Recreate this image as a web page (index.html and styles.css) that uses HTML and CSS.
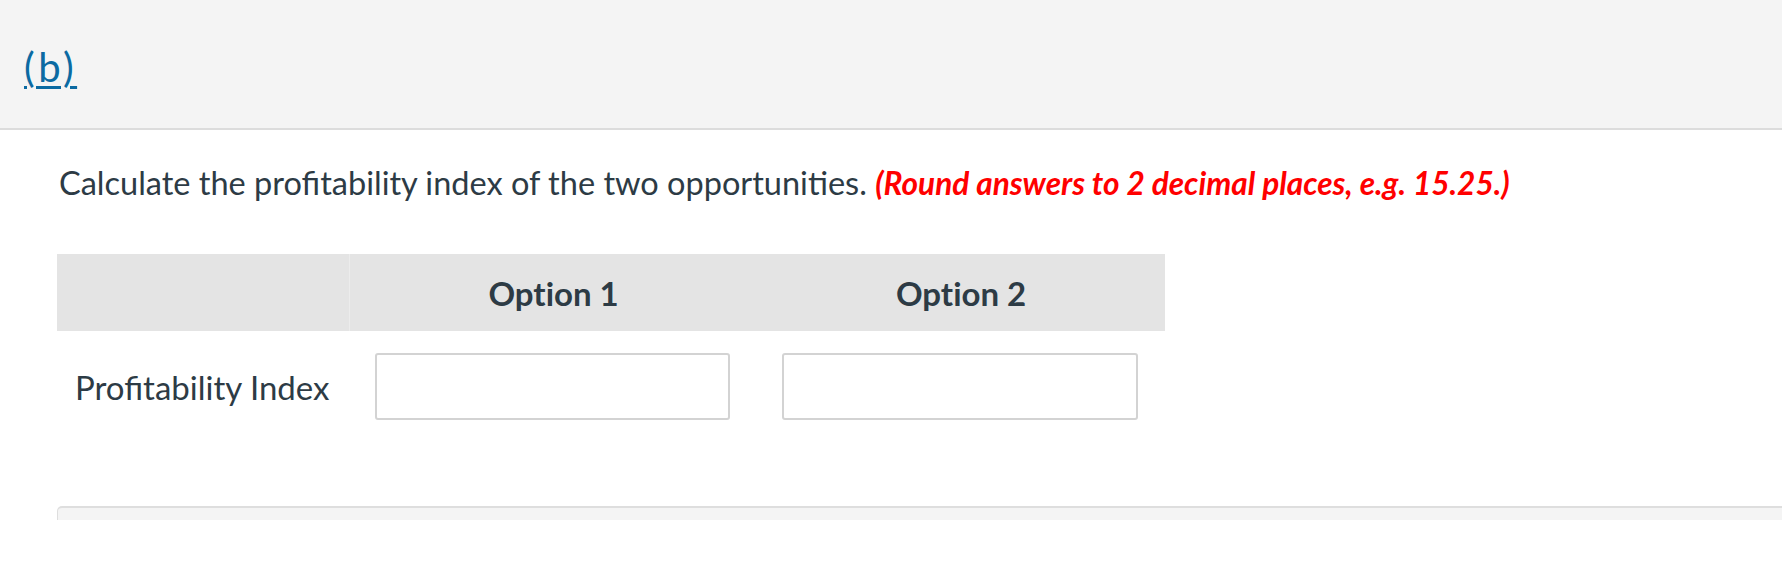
FILE: index.html
```html
<!DOCTYPE html>
<html lang="en">
<head>
<meta charset="utf-8">
<title>Part (b)</title>
<link rel="stylesheet" href="styles.css">
</head>
<body>
<header class="part-header">
  <a class="part-link" href="#">(b)</a>
</header>
<main class="content">
  <p class="prompt">Calculate the profitability index of the two opportuni&zwnj;ties. <em class="hint">(Round answers to 2 decimal places, e.g. 15.25.)</em></p>
  <table class="answer-table">
    <thead>
      <tr>
        <th class="col-label"></th>
        <th class="col-opt">Opt&zwnj;ion 1</th>
        <th class="col-opt">Opt&zwnj;ion 2</th>
      </tr>
    </thead>
    <tbody>
      <tr>
        <td class="row-label">Profitability Index</td>
        <td class="cell"><input class="answer" type="text"></td>
        <td class="cell"><input class="answer" type="text"></td>
      </tr>
    </tbody>
  </table>
  <div class="next-panel"></div>
</main>
</body>
</html>
```

FILE: styles.css
```css
html, body {
  margin: 0;
  padding: 0;
  background: #ffffff;
}
body {
  font-family: "Lato", "Liberation Sans", sans-serif;
  color: #2d3b45;
  overflow: hidden;
}
.part-header {
  height: 128px;
  background: #f4f4f4;
  border-bottom: 2px solid #dcdcdc;
  display: flex;
  align-items: center;
  padding-left: 24px;
  box-sizing: content-box;
}
.part-link {
  font-size: 40px;
  letter-spacing: 3.5px;
  color: #0b6aa2;
  text-decoration: underline;
  text-decoration-thickness: 3px;
  text-underline-offset: 4px;
  margin-top: 6px;
}
.content {
  padding-left: 57px;
}
.prompt {
  margin: 31px 0 49px 2px;
  font-size: 32.5px;
  line-height: 44px;
}
.hint {
  color: #ff0000;
  font-weight: 700;
  font-style: italic;
  font-size: 31.6px;
}
.answer-table {
  border-collapse: collapse;
  width: 1108px;
  table-layout: fixed;
}
.col-label { width: 292px; }
.answer-table th {
  background: #e4e4e4;
  height: 77px;
  padding: 0;
  font-size: 33px;
  font-weight: 700;
  text-align: center;
}
.col-opt { border-left: 1px solid #ececec; }
.answer-table th.col-opt + th.col-opt { border-left: none; }
.row-label {
  font-size: 33px;
  padding: 22px 0 22px 18px;
  vertical-align: middle;
  white-space: nowrap;
}
.cell {
  padding: 22px 27px 22px 25px;
  vertical-align: middle;
}
.answer {
  display: block;
  box-sizing: border-box;
  width: 100%;
  height: 67px;
  border: 2px solid #d3d3d3;
  border-radius: 3px;
  background: #fff;
  font: inherit;
  padding: 0 10px;
}
.next-panel {
  margin-top: 64px;
  height: 12px;
  background: #f4f4f4;
  border-top: 2px solid #dedede;
  border-left: 1px solid #dedede;
  border-top-left-radius: 5px;
}
```
